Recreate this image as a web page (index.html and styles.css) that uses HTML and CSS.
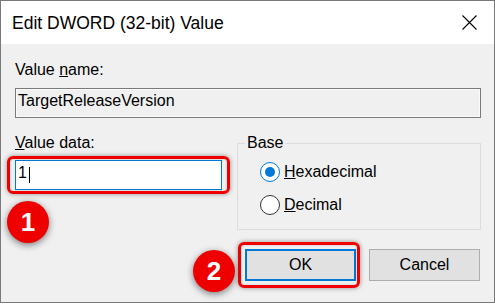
FILE: index.html
```html
<!DOCTYPE html>
<html lang="en">
<head>
  <meta charset="UTF-8" />
  <title>Edit DWORD (32-bit) Value</title>
  <link rel="stylesheet" href="styles.css">
</head>
<body>

  <div class="window">
    <!-- Title bar -->
    <div class="titlebar">
      <span class="title">Edit DWORD (32-bit) Value</span>
      <svg class="close" width="15" height="15" viewBox="0 0 15 15">
        <path d="M0.5 0.5L14.5 14.5M14.5 0.5L0.5 14.5" stroke="#000" stroke-width="1.1" fill="none" />
      </svg>
    </div>

    <!-- Dialog body -->
    <div class="content">
      <div class="label">Value <u>n</u>ame:</div>
      <div class="field field-readonly">TargetReleaseVersion</div>

      <div class="row">
        <div class="data-col">
          <div class="label"><u>V</u>alue data:</div>
          <div class="highlight highlight-data">
            <div class="field field-edit">1<span class="caret"></span></div>
          </div>
        </div>

        <fieldset class="base">
          <legend>Base</legend>
          <div class="radio radio-first checked">
            <span class="radio-dot"></span>
            <span><u>H</u>exadecimal</span>
          </div>
          <div class="radio">
            <span class="radio-dot"></span>
            <span><u>D</u>ecimal</span>
          </div>
        </fieldset>
      </div>

      <div class="buttons">
        <div class="highlight highlight-ok">
          <button class="btn btn-default">OK</button>
        </div>
        <button class="btn">Cancel</button>
      </div>
    </div>

    <!-- Step badges -->
    <span class="badge badge-one">1</span>
    <span class="badge badge-two">2</span>
  </div>

</body>
</html>
```

FILE: styles.css
```css
:root {
  --accent: #0078d7;
  --mark: #ee0000;
}

* {
  margin: 0;
  padding: 0;
  box-sizing: border-box;
}

html, body {
  height: 100%;
  background-color: #fff;
  font-family: 'Liberation Sans', Arial, sans-serif;
  color: #000;
  overflow: hidden;
}

.window {
  position: relative;
  width: 495px;
  height: 303px;
  border: 1px solid #7a7a7a;
  background-color: #f0f0f0;
  display: flex;
  flex-direction: column;
}

/* === TITLE BAR === */
.titlebar {
  height: 43px;
  background-color: #fff;
  display: flex;
  align-items: center;
  justify-content: space-between;
  padding: 0 17px 0 11px;
}

.title {
  font-size: 17.5px;
  line-height: 20px;
}

.close {
  display: block;
}

/* === BODY === */
.content {
  padding: 17px 13px 0 14px;
  font-size: 16px;
}

.label {
  line-height: 18px;
}

.field {
  height: 30px;
  margin-top: 9px;
  padding: 0 2px 5px;
  display: flex;
  align-items: center;
  line-height: 18px;
}

.field-readonly {
  border: 1px solid #7a7a7a;
  box-shadow: inset 0 0 0 1px #fbfbfb;
}

.field-edit {
  margin-top: 0;
  border: 1px solid var(--accent);
  background-color: #fff;
}

.caret {
  display: inline-block;
  width: 1px;
  height: 16px;
  margin-left: 2px;
  margin-top: 4px;
  background-color: #000;
}

.row {
  margin-top: 16px;
  display: grid;
  grid-template-columns: 207px 1fr;
  column-gap: 15px;
  align-items: start;
}

.data-col .highlight {
  margin-top: 8px;
}

/* Red annotation rings */
.highlight {
  position: relative;
}

.highlight::after {
  content: '';
  position: absolute;
  border: 3px solid var(--mark);
  border-radius: 6px;
  box-shadow: 0 0 5px rgba(0, 0, 0, 0.4), inset 0 0 2px rgba(0, 0, 0, 0.25);
  pointer-events: none;
}

.highlight-data::after {
  inset: -4px -8px -4px -8px;
}

.highlight-ok::after {
  inset: -7px -4px -7px -7px;
}

/* Base group box */
.base {
  border: 1px solid #dcdcdc;
  padding: 0 0 13px 7px;
  min-width: 0;
}

.base legend {
  padding: 0 2px;
  line-height: 18px;
}

.radio {
  display: flex;
  align-items: center;
  gap: 4px;
  height: 22px;
  margin-top: 11px;
  padding-left: 15px;
}

.radio-first {
  margin-top: 9px;
}

.radio-dot {
  width: 20px;
  height: 20px;
  border: 1px solid #333;
  border-radius: 50%;
  background-color: #fff;
  display: flex;
  align-items: center;
  justify-content: center;
}

.radio.checked .radio-dot {
  border-color: var(--accent);
}

.radio.checked .radio-dot::before {
  content: '';
  width: 10px;
  height: 10px;
  border-radius: 50%;
  background-color: var(--accent);
}

/* Buttons */
.buttons {
  margin-top: 19px;
  padding-right: 1px;
  display: flex;
  justify-content: flex-end;
  gap: 13px;
}

.btn {
  width: 111px;
  height: 32px;
  border: 1px solid #adadad;
  background-color: #e1e1e1;
  font-family: inherit;
  font-size: 16px;
  color: #000;
  display: block;
}

.btn-default {
  border: 2px solid var(--accent);
}

/* Step badges */
.badge {
  position: absolute;
  width: 42px;
  height: 42px;
  border-radius: 50%;
  background-color: var(--mark);
  color: #fff;
  font-size: 26px;
  font-weight: bold;
  display: flex;
  align-items: center;
  justify-content: center;
  box-shadow: 0 2px 7px rgba(0, 0, 0, 0.5);
}

.badge-one {
  left: 6px;
  top: 200px;
}

.badge-two {
  left: 192px;
  top: 249px;
}
```
